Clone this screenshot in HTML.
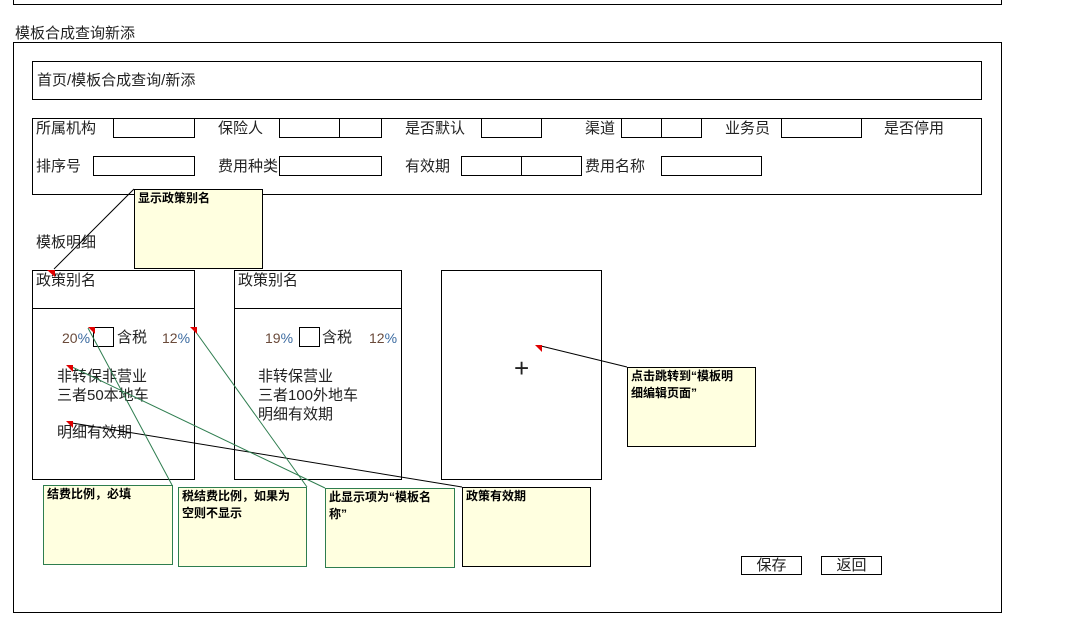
<!DOCTYPE html>
<html><head><meta charset="utf-8"><style>
body{margin:0;width:1079px;height:629px;background:#fff;position:relative;overflow:hidden;font-family:"Liberation Sans","Noto Sans CJK SC",sans-serif;font-size:15px;color:#222}
div{position:absolute;box-sizing:border-box}
.b{border:1px solid #000}
.t{white-space:nowrap;line-height:17px}
.n{background:#ffffe0;border:1px solid #000;font-weight:bold;font-size:12px;line-height:17px;padding:0 14px 0 3px;color:#000}
.g{border-color:#2e7d4f}
.btn{border:1px solid #000;text-align:center;line-height:17px}
</style></head><body>
<div class="b" style="left:13px;top:-2px;width:989px;height:7px"></div>
<div class="t" style="left:15px;top:25px">模板合成查询新添</div>
<div class="b" style="left:13px;top:42px;width:989px;height:571px"></div>
<div class="b" style="left:32px;top:61px;width:950px;height:39px"></div>
<div class="t" style="left:37px;top:72px">首页/模板合成查询/新添</div>
<div class="b" style="left:32px;top:118px;width:950px;height:77px"></div>
<div class="t" style="left:36px;top:120px">所属机构</div>
<div class="b" style="left:113px;top:118px;width:82px;height:20px"></div>
<div class="t" style="left:218px;top:120px">保险人</div>
<div class="b" style="left:279px;top:118px;width:61px;height:20px"></div>
<div class="b" style="left:339px;top:118px;width:43px;height:20px"></div>
<div class="t" style="left:405px;top:120px">是否默认</div>
<div class="b" style="left:481px;top:118px;width:61px;height:20px"></div>
<div class="t" style="left:585px;top:120px">渠道</div>
<div class="b" style="left:621px;top:118px;width:41px;height:20px"></div>
<div class="b" style="left:661px;top:118px;width:41px;height:20px"></div>
<div class="t" style="left:725px;top:120px">业务员</div>
<div class="b" style="left:781px;top:118px;width:81px;height:20px"></div>
<div class="t" style="left:884px;top:120px">是否停用</div>
<div class="t" style="left:36px;top:158px">排序号</div>
<div class="b" style="left:93px;top:156px;width:102px;height:20px"></div>
<div class="t" style="left:218px;top:158px">费用种类</div>
<div class="b" style="left:279px;top:156px;width:103px;height:20px"></div>
<div class="t" style="left:405px;top:158px">有效期</div>
<div class="b" style="left:461px;top:156px;width:61px;height:20px"></div>
<div class="b" style="left:521px;top:156px;width:61px;height:20px"></div>
<div class="t" style="left:585px;top:158px">费用名称</div>
<div class="b" style="left:661px;top:156px;width:101px;height:20px"></div>
<div class="t" style="left:36px;top:234px">模板明细</div>

<div class="b" style="left:32px;top:270px;width:163px;height:210px"></div>
<div class="b" style="left:32px;top:270px;width:163px;height:39px"></div>
<div class="t" style="left:36px;top:272px">政策别名</div>
<div class="t" style="left:62px;top:330px;color:#6a4a3a;font-size:14px">20<span style="color:#3a6aa0">%</span></div>
<div class="b" style="left:93px;top:327px;width:21px;height:20px"></div>
<div class="t" style="left:117px;top:329px">含税</div>
<div class="t" style="left:162px;top:330px;color:#6a4a3a;font-size:14px">12<span style="color:#3a6aa0">%</span></div>
<div class="t" style="left:57px;top:367px;line-height:19px">非转保非营业<br>三者50本地车</div>
<div class="t" style="left:57px;top:424px">明细有效期</div>

<div class="b" style="left:234px;top:270px;width:168px;height:210px"></div>
<div class="b" style="left:234px;top:270px;width:168px;height:39px"></div>
<div class="t" style="left:238px;top:272px">政策别名</div>
<div class="t" style="left:265px;top:330px;color:#6a4a3a;font-size:14px">19<span style="color:#3a6aa0">%</span></div>
<div class="b" style="left:299px;top:327px;width:21px;height:20px"></div>
<div class="t" style="left:322px;top:329px">含税</div>
<div class="t" style="left:369px;top:330px;color:#6a4a3a;font-size:14px">12<span style="color:#3a6aa0">%</span></div>
<div class="t" style="left:258px;top:367px;line-height:19px">非转保营业<br>三者100外地车<br>明细有效期</div>

<div class="b" style="left:441px;top:270px;width:161px;height:210px"></div>
<div class="t" style="left:514px;top:355px;font-size:26px;line-height:26px">+</div>

<div class="n" style="left:134px;top:189px;width:129px;height:80px">显示政策别名</div>
<div class="n" style="left:627px;top:367px;width:129px;height:80px">点击跳转到“模板明细编辑页面”</div>
<div class="n g" style="left:43px;top:485px;width:130px;height:80px">结费比例，必填</div>
<div class="n g" style="left:178px;top:487px;width:129px;height:80px">税结费比例，如果为空则不显示</div>
<div class="n g" style="left:325px;top:488px;width:130px;height:80px">此显示项为“模板名称”</div>
<div class="n" style="left:462px;top:487px;width:129px;height:80px">政策有效期</div>

<div class="btn" style="left:741px;top:556px;width:61px;height:19px">保存</div>
<div class="btn" style="left:821px;top:556px;width:61px;height:19px">返回</div>

<svg width="1079" height="629" style="position:absolute;left:0;top:0" fill="none">
<g stroke="#000" stroke-width="1">
<line x1="134" y1="189" x2="54" y2="269"/>
<line x1="627" y1="367" x2="541" y2="346"/>
<line x1="462" y1="487" x2="72" y2="423"/>
</g>
<g stroke="#2e7d4f" stroke-width="1">
<line x1="172" y1="485" x2="88" y2="328"/>
<line x1="307" y1="487" x2="193" y2="328"/>
<line x1="325" y1="488" x2="70" y2="366"/>
</g>
<g fill="#e00000">
<polygon points="47,270 55,270 55,277"/>
<polygon points="88,327 95,327 95,334"/>
<polygon points="190,327 197,327 197,334"/>
<polygon points="66,365 73,365 73,372"/>
<polygon points="66,421 73,421 73,428"/>
<polygon points="535,345 542,345 542,352"/>
</g>
</svg>
</body></html>
